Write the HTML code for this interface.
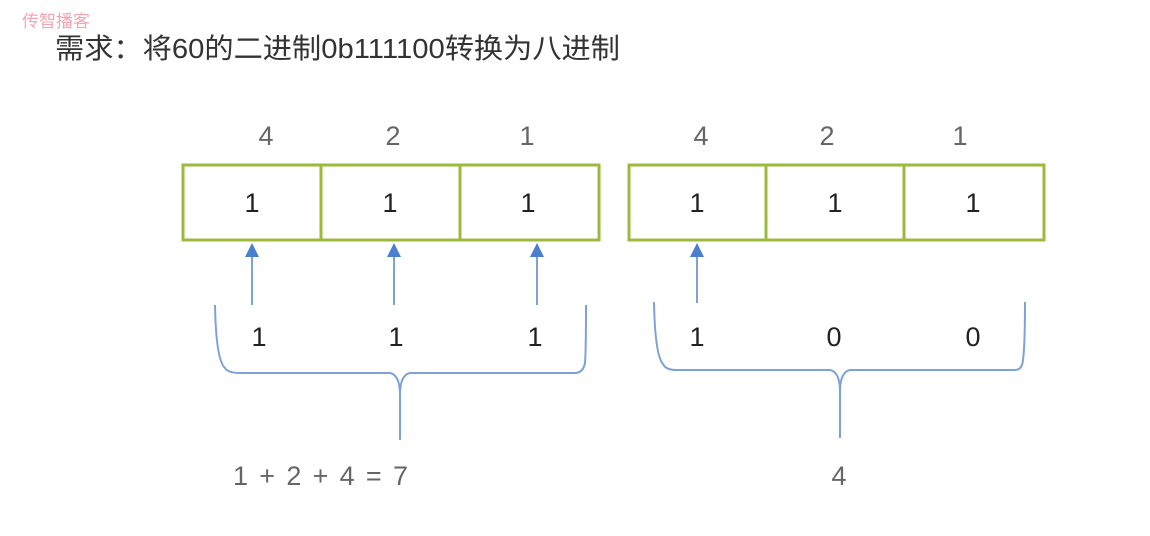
<!DOCTYPE html>
<html><head><meta charset="utf-8"><style>
html,body{margin:0;padding:0;background:#fff;width:1150px;height:536px;overflow:hidden}
svg{display:block}
</style></head><body>
<svg width="1150" height="536" xmlns="http://www.w3.org/2000/svg" font-family="Liberation Sans, 'Noto Sans CJK SC', sans-serif">
<text x="22" y="27" font-size="17" fill="#f4a6b0" font-family="'Noto Sans CJK SC', sans-serif">传智播客</text>
<text x="55" y="58" font-size="28" fill="#333" textLength="565" lengthAdjust="spacingAndGlyphs" font-family="'Liberation Sans','Noto Sans CJK SC',sans-serif">需求：将60的二进制0b111100转换为八进制</text>
<g fill="#666" font-size="27" text-anchor="middle">
<text x="266" y="145">4</text><text x="393" y="145">2</text><text x="527" y="145">1</text>
<text x="701" y="145">4</text><text x="827" y="145">2</text><text x="960" y="145">1</text>
</g>
<g fill="none" stroke="#9cbb3e" stroke-width="3">
<rect x="183" y="165" width="416" height="75"/>
<line x1="321" y1="165" x2="321" y2="240"/><line x1="460" y1="165" x2="460" y2="240"/>
<rect x="629" y="165" width="415" height="75"/>
<line x1="766" y1="165" x2="766" y2="240"/><line x1="904" y1="165" x2="904" y2="240"/>
</g>
<g fill="#222" font-size="27" text-anchor="middle">
<text x="252" y="212">1</text><text x="390" y="212">1</text><text x="528" y="212">1</text>
<text x="697" y="212">1</text><text x="835" y="212">1</text><text x="973" y="212">1</text>
</g>
<g stroke="#7fa2d6" stroke-width="2" fill="none">
<line x1="252" y1="255" x2="252" y2="305"/><line x1="394" y1="255" x2="394" y2="305"/><line x1="537" y1="255" x2="537" y2="305"/>
<line x1="697" y1="255" x2="697" y2="303"/>
<path d="M215 305 Q216 360 225 368 Q228 373 240 373 L390 373 Q400 375 400 395 L400 440 M400 395 Q400 375 410 373 L575 373 Q583 373 585 363 Q586 350 586 305"/>
<path d="M654 302 Q655 355 663 364 Q666 370 676 370 L830 370 Q840 372 840 392 L840 438 M840 392 Q840 372 850 370 L1015 370 Q1022 370 1023 360 Q1025 345 1025 302"/>
</g>
<g fill="#4a7fd0">
<path d="M252 243 L245 257 L259 257Z"/><path d="M394 243 L387 257 L401 257Z"/><path d="M537 243 L530 257 L544 257Z"/><path d="M697 243 L690 257 L704 257Z"/>
</g>
<g fill="#222" font-size="27" text-anchor="middle">
<text x="259" y="346">1</text><text x="396" y="346">1</text><text x="535" y="346">1</text>
<text x="697" y="346">1</text><text x="834" y="346">0</text><text x="973" y="346">0</text>
</g>
<g fill="#666" font-size="27">
<text x="233" y="485" textLength="175" lengthAdjust="spacing">1 + 2 + 4 = 7</text><text x="839" y="485" text-anchor="middle">4</text>
</g>
</svg>
</body></html>
